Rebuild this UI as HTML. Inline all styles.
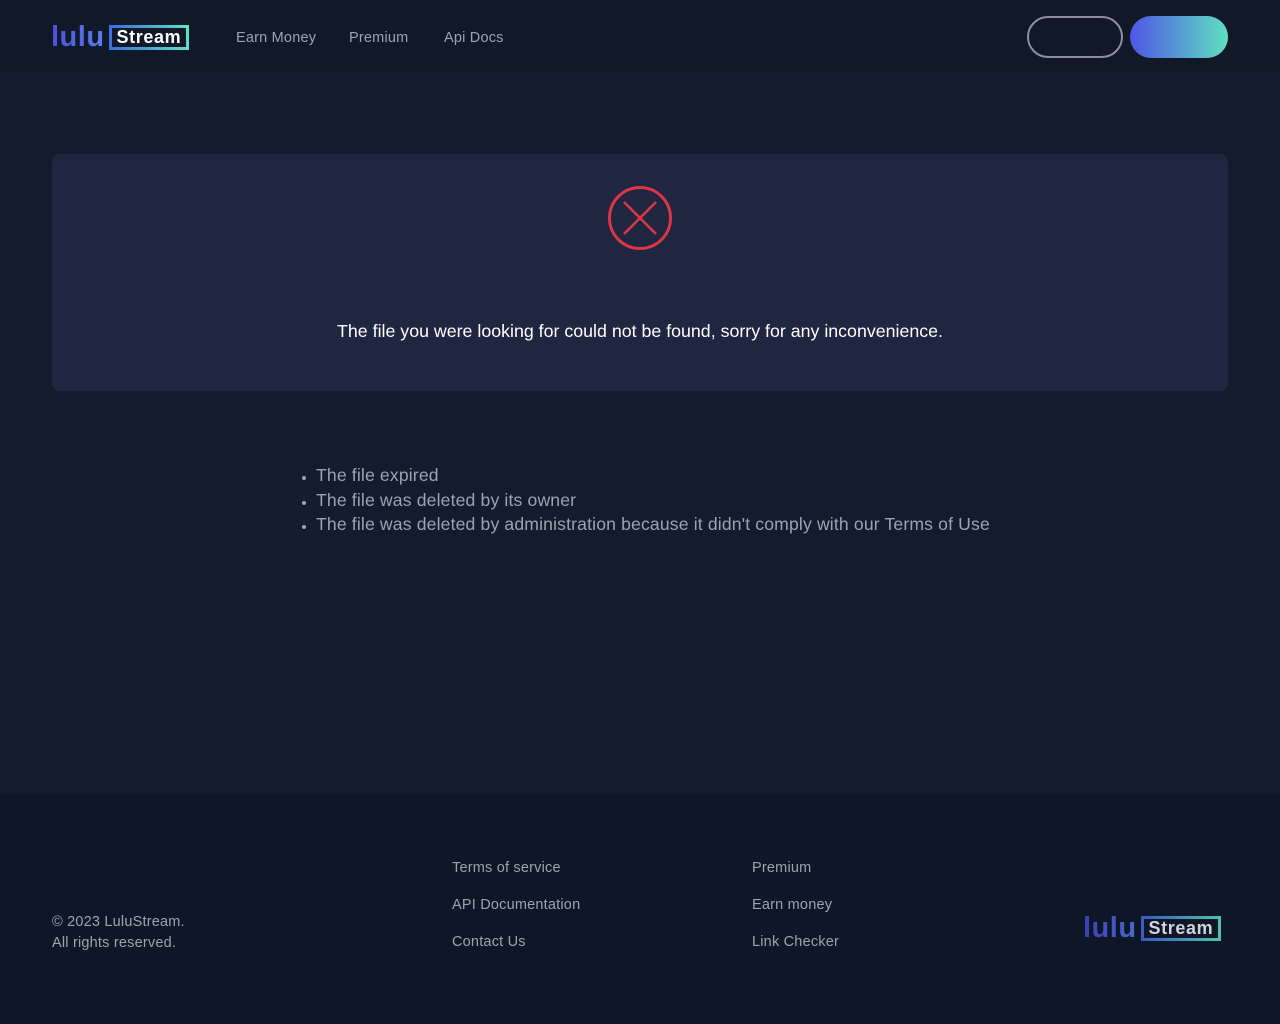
<!DOCTYPE html>
<html><head><meta charset="utf-8"><style>
*{margin:0;padding:0;box-sizing:border-box}
body{width:1280px;height:1024px;background:#131b2f;font-family:"Liberation Sans",sans-serif;position:relative;overflow:hidden}
.hdr{position:absolute;top:0;left:0;width:1280px;height:72px;background:#111827}
.logo{position:absolute;display:flex;align-items:center}
.logo .l{font-weight:bold;font-size:29px;background:linear-gradient(90deg,#4a4fe0,#5a7fe8);-webkit-background-clip:text;color:transparent;letter-spacing:0.5px}
.logo .s{margin-left:4px;border:3px solid;border-image:linear-gradient(90deg,#3c6ee0,#5ee0c0) 1;color:#fff;font-weight:bold;font-size:18px;padding:0 5px;line-height:19px;letter-spacing:0.6px}
.nav{position:absolute;top:30px;font-size:14.5px;color:#9ca3af;letter-spacing:0.2px}
.btn1{position:absolute;left:1027px;top:16px;width:96px;height:42px;border:2px solid #8d8fa0;border-radius:21px}
.btn2{position:absolute;left:1130px;top:16px;width:98px;height:42px;border-radius:21px;background:linear-gradient(90deg,#4f55e6,#5fe0c0)}
.card{position:absolute;left:52px;top:154px;width:1176px;height:237px;background:#1e2640;border-radius:8px}
.msg{position:absolute;top:321px;width:100%;text-align:center;color:#fff;font-size:17.8px}
ul{position:absolute;left:316px;top:463px;color:#9ca3af;font-size:17.6px;line-height:24.5px;letter-spacing:0.15px}
li::marker{font-size:12px}
.foot{position:absolute;top:793px;left:0;width:1280px;height:231px;background:#0f1627}
.f{position:absolute;color:#9ca3af;font-size:14.5px;letter-spacing:0.2px}
</style></head><body>
<div class="hdr">
<div class="logo" style="left:51px;top:21px"><span class="l">lulu</span><span class="s">Stream</span></div>
<span class="nav" style="left:236px">Earn Money</span>
<span class="nav" style="left:349px">Premium</span>
<span class="nav" style="left:444px">Api Docs</span>
<div class="btn1"></div><div class="btn2"></div>
</div>
<div class="card">
<svg style="position:absolute;left:555px;top:31px" width="66" height="66" viewBox="0 0 66 66"><circle cx="33" cy="33" r="30.5" fill="none" stroke="#dc3545" stroke-width="3"/><path d="M17 17L49 49M49 17L17 49" stroke="#dc3545" stroke-width="2.5"/></svg>
</div>
<div class="msg">The file you were looking for could not be found, sorry for any inconvenience.</div>
<ul><li>The file expired</li><li>The file was deleted by its owner</li><li>The file was deleted by administration because it didn't comply with our Terms of Use</li></ul>
<div class="foot">
<div class="f" style="left:52px;top:119px;line-height:21px">© 2023 LuluStream.<br>All rights reserved.</div>
<div class="f" style="left:452px;top:67px">Terms of service</div>
<div class="f" style="left:452px;top:104px">API Documentation</div>
<div class="f" style="left:452px;top:141px">Contact Us</div>
<div class="f" style="left:752px;top:67px">Premium</div>
<div class="f" style="left:752px;top:104px">Earn money</div>
<div class="f" style="left:752px;top:141px">Link Checker</div>
<div class="logo" style="left:1083px;top:119px"><span class="l" style="background:linear-gradient(90deg,#3c3fb0,#4a6ad0);-webkit-background-clip:text">lulu</span><span class="s" style="color:#cfd3dc;border-image:linear-gradient(90deg,#3a5cc0,#50c0a8) 1">Stream</span></div>
</div>
</body></html>
